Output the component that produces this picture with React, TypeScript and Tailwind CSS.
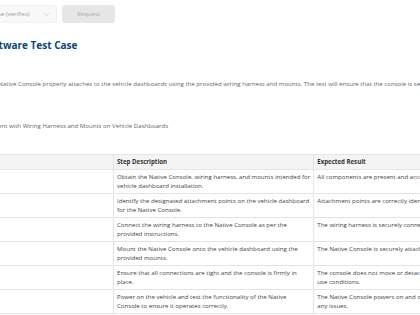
import { ChevronDown } from 'lucide-react';

// each cell keeps its line breaks so the rows wrap the same way at this tiny size
const steps = [
  {
    id: 1,
    action: [
      'Obtain the Native Console, wiring harness, and mounts intended for',
      'vehicle dashboard installation.',
    ],
    expected: ['All components are present and accounted for.'],
  },
  {
    id: 2,
    action: [
      'Identify the designated attachment points on the vehicle dashboard',
      'for the Native Console.',
    ],
    expected: ['Attachment points are correctly identified.'],
  },
  {
    id: 3,
    action: ['Connect the wiring harness to the Native Console as per the', 'provided instructions.'],
    expected: ['The wiring harness is securely connected.'],
  },
  {
    id: 4,
    action: ['Mount the Native Console onto the vehicle dashboard using the', 'provided mounts.'],
    expected: ['The Native Console is securely attached.'],
  },
  {
    id: 5,
    action: ['Ensure that all connections are tight and the console is firmly in', 'place.'],
    expected: ['The console does not move or detach under normal vehicle', 'use conditions.'],
  },
  {
    id: 6,
    action: [
      'Power on the vehicle and test the functionality of the Native',
      'Console to ensure it operates correctly.',
    ],
    expected: ['The Native Console powers on and operates without', 'any issues.'],
  },
];

function Lines({ lines }: { lines: string[] }) {
  return (
    <>
      {lines.map((line) => (
        <span key={line} className="block whitespace-nowrap">
          {line}
        </span>
      ))}
    </>
  );
}

export default function App() {
  return (
    <div className="h-[315px] w-[420px] overflow-hidden bg-white font-['Open_Sans',sans-serif] text-[#444]">
      <div className="-ml-[18px] w-[700px]">
        <div className="flex gap-[5px] pt-[5px]">
          <div className="flex h-[18px] w-[75px] items-center justify-between rounded-[3px] border border-[#f0f0f0] bg-[#f8f8f8] pl-[8px] pr-[5px] text-[6px] text-[#999]">
            <span>Case (verifies)</span>
            <ChevronDown size={9} strokeWidth={1.2} className="text-[#aaa]" />
          </div>
          <button className="h-[18px] w-[53px] rounded-[3px] bg-[#e6e6e6] text-[6px] text-[#aaa]">
            Request
          </button>
        </div>

        <h1 className="ml-[1px] mt-[14px] text-[10px] font-bold leading-[16px] text-[#0d4677]">
          Software Test Case
        </h1>

        <p className="-ml-[8px] mt-[26px] whitespace-nowrap text-[6.1px] leading-[9.5px] text-[#666]">
          Test the Native Console properly attaches to the vehicle dashboards using the provided
          wiring harness and mounts. The test will ensure that the console is securely installed.
        </p>

        <p className="-ml-[52px] mt-[32px] text-[6.1px] leading-[9.5px] text-[#666]">
          Native Console Attachment with Wiring Harness and Mounts on Vehicle Dashboards
        </p>

        <table className="-ml-[30px] mt-[24px] table-fixed border-collapse text-[6.1px] leading-[9.5px]">
          <colgroup>
            <col className="w-[161px]" />
            <col className="w-[199px]" />
            <col className="w-[180px]" />
          </colgroup>
          <thead>
            <tr className="bg-[#f4f4f4] text-left text-[#333]">
              <th className="h-[15px] border border-[#e4e4e4] px-[3px] font-bold">Step #</th>
              <th className="border border-[#e4e4e4] px-[3px] font-bold">Step Description</th>
              <th className="border border-[#e4e4e4] px-[3px] font-bold">Expected Result</th>
            </tr>
          </thead>
          <tbody>
            {steps.map((step) => (
              <tr key={step.id} className="align-top">
                <td className="border border-[#e4e4e4] px-[3px] pb-[2.5px] pt-[1.5px]">{step.id}</td>
                <td className="border border-[#e4e4e4] px-[3px] pb-[2.5px] pt-[1.5px]">
                  <Lines lines={step.action} />
                </td>
                <td className="border border-[#e4e4e4] px-[3px] pb-[2.5px] pt-[1.5px]">
                  <Lines lines={step.expected} />
                </td>
              </tr>
            ))}
          </tbody>
        </table>
      </div>
    </div>
  );
}
